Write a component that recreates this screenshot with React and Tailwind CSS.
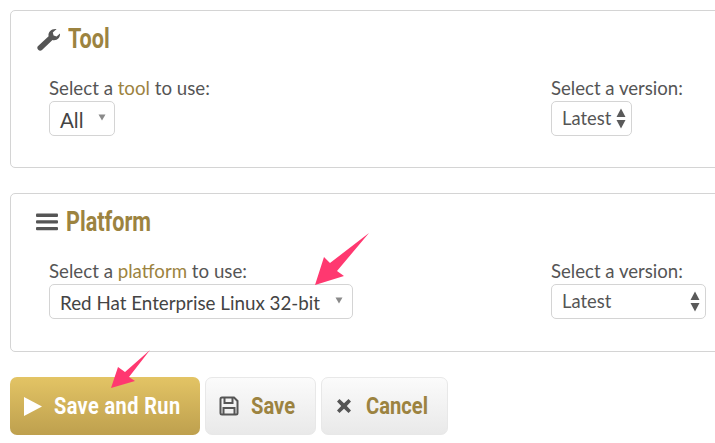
function Updown() {
  return (
    <svg width="10" height="21" viewBox="0 0 10 21" className="shrink-0">
      <path d="M5 0.5 L9.5 9 L0.5 9 Z M0.5 12 L9.5 12 L5 20.5 Z" fill="#5a5a5a" />
    </svg>
  );
}

function Caret() {
  return (
    <svg width="8" height="7" viewBox="0 0 8 7" className="-mt-[6px] shrink-0">
      <path d="M0.5 0.5 L7.5 0.5 L4 6.5 Z" fill="#8a8a8a" />
    </svg>
  );
}

function Wrench() {
  return (
    <svg width="25" height="23" viewBox="0 0 25 23" className="shrink-0">
      <path
        d="M24 5.5 C24.5 9.5 21 13 16.5 12 L6 22 C4.8 23 3.4 23 2.2 21.8 C1 20.6 1 19.2 2.1 18.1 L12.6 8.2 C11.8 4 15.5 0.3 20.6 1 L16.8 4.6 L17.6 7.6 L20.6 8.4 Z"
        fill="#555"
      />
    </svg>
  );
}

function Bars() {
  return (
    <svg width="22" height="18" viewBox="0 0 22 18" className="shrink-0">
      <rect x="0" y="0.5" width="22" height="3.4" rx="1" fill="#555" />
      <rect x="0" y="7.2" width="22" height="3.4" rx="1" fill="#555" />
      <rect x="0" y="13.9" width="22" height="3.4" rx="1" fill="#555" />
    </svg>
  );
}

function Panel({ icon, title, headClass, word, selectBox, versionBox, heightClass }) {
  return (
    <section className={`w-[720px] ${heightClass} border border-[#d4d4d4] rounded-[5px] bg-white flex flex-col`}>
      <div className={`flex items-center mt-[11px] pl-[25px] h-[34px] ${headClass}`}>
        {icon}
        <h2 className="text-[27px] leading-none font-bold text-[#9c8340] font-[Roboto,sans-serif] scale-x-[0.8] origin-left whitespace-nowrap">{title}</h2>
      </div>
      <div className="flex pl-[38px] mt-[20px] font-[Lato,sans-serif]">
        <div className="w-[502px] shrink-0">
          <p className="text-[18.7px] leading-[24px] mb-[1px] text-[#555] whitespace-nowrap">
            Select a <span className="text-[#9c8340]">{word}</span> to use:
          </p>
          {selectBox}
        </div>
        <div>
          <p className="text-[18.6px] leading-[24px] mb-[1px] text-[#555] whitespace-nowrap">Select a version:</p>
          {versionBox}
        </div>
      </div>
    </section>
  );
}

export default function App() {
  return (
    <div className="relative w-[715px] h-[443px] overflow-hidden bg-white pl-[10px] pt-[10px]">
      <Panel
        icon={<Wrench />}
        title="Tool"
        headClass="gap-[7px]"
        heightClass="h-[158px]"
        word="tool"
        selectBox={
          <div className="flex items-center justify-between w-[66px] h-[35px] border border-[#d4d4d4] rounded-[5px] pl-[10px] pr-[8px] pt-[3px] text-[20.5px] text-[#444]">
            <span>All</span>
            <Caret />
          </div>
        }
        versionBox={
          <div className="flex items-center w-[81px] h-[35px] border border-[#d4d4d4] rounded-[5px] pl-[10px] text-[18.4px] text-[#555] gap-[5px]">
            <span>Latest</span>
            <Updown />
          </div>
        }
      />
      <div className="h-[25px]" />
      <Panel
        icon={<Bars />}
        title="Platform"
        headClass="gap-[8px]"
        heightClass="h-[159px]"
        word="platform"
        selectBox={
          <div className="flex items-center justify-between w-[304px] h-[35px] border border-[#d4d4d4] rounded-[5px] pl-[10px] pr-[9px] pt-[3px] text-[18.8px] text-[#444] whitespace-nowrap">
            <span>Red Hat Enterprise Linux 32-bit</span>
            <Caret />
          </div>
        }
        versionBox={
          <div className="flex items-center justify-between w-[155px] h-[35px] border border-[#d4d4d4] rounded-[5px] pl-[10px] pr-[5px] text-[18.4px] text-[#555]">
            <span>Latest</span>
            <Updown />
          </div>
        }
      />
      <div className="flex gap-[5px] mt-[25px] font-[Roboto,sans-serif] text-[24px] font-bold whitespace-nowrap">
        <button className="flex items-center w-[190px] h-[58px] rounded-[7px] bg-gradient-to-b from-[#e3c465] to-[#bea04e] pl-[14px] gap-[12px] text-white">
          <svg width="18" height="19" viewBox="0 0 18 19" className="shrink-0"><path d="M0 0 L18 9.5 L0 19 Z" fill="#fff" /></svg>
          <span className="scale-x-[0.83] origin-left tracking-[0.5px]">Save and Run</span>
        </button>
        <button className="flex items-center w-[111px] h-[58px] rounded-[7px] border border-[#e8e8e8] bg-gradient-to-b from-[#fbfbfb] to-[#e9e9e9] pl-[13px] gap-[12px] text-[#9c8340]">
          <svg width="20" height="20" viewBox="0 0 20 20" fill="none" stroke="#555" strokeWidth="2" className="shrink-0">
            <path d="M1.5 3 Q1.5 1.5 3 1.5 H15 L18.5 5 V17 Q18.5 18.5 17 18.5 H3 Q1.5 18.5 1.5 17 Z" />
            <path d="M5.5 1.5 V7 H13.5 V1.5 M4.5 18.5 V12 H15.5 V18.5" />
          </svg>
          <span className="scale-x-[0.84] origin-left">Save</span>
        </button>
        <button className="flex items-center w-[127px] h-[58px] rounded-[7px] border border-[#e8e8e8] bg-gradient-to-b from-[#fbfbfb] to-[#e9e9e9] pl-[14px] gap-[14px] text-[#9c8340]">
          <svg width="16" height="16" viewBox="0 0 16 16" className="shrink-0"><path d="M3.5 1 L8 5.2 L12.5 1 L15 3.5 L10.8 8 L15 12.5 L12.5 15 L8 10.8 L3.5 15 L1 12.5 L5.2 8 L1 3.5 Z" fill="#555" /></svg>
          <span className="scale-x-[0.84] origin-left">Cancel</span>
        </button>
      </div>
      <svg className="absolute left-0 top-0 pointer-events-none" width="715" height="443" viewBox="0 0 715 443">
        <path d="M369 233 L337 271 L344 276 L315 285 L324 257 L330 263 Z" fill="#ff3870" />
        <path d="M150 350 L129 377 L135 381 L111 388 L118 367 L125 372 Z" fill="#ff3870" />
      </svg>
    </div>
  );
}
